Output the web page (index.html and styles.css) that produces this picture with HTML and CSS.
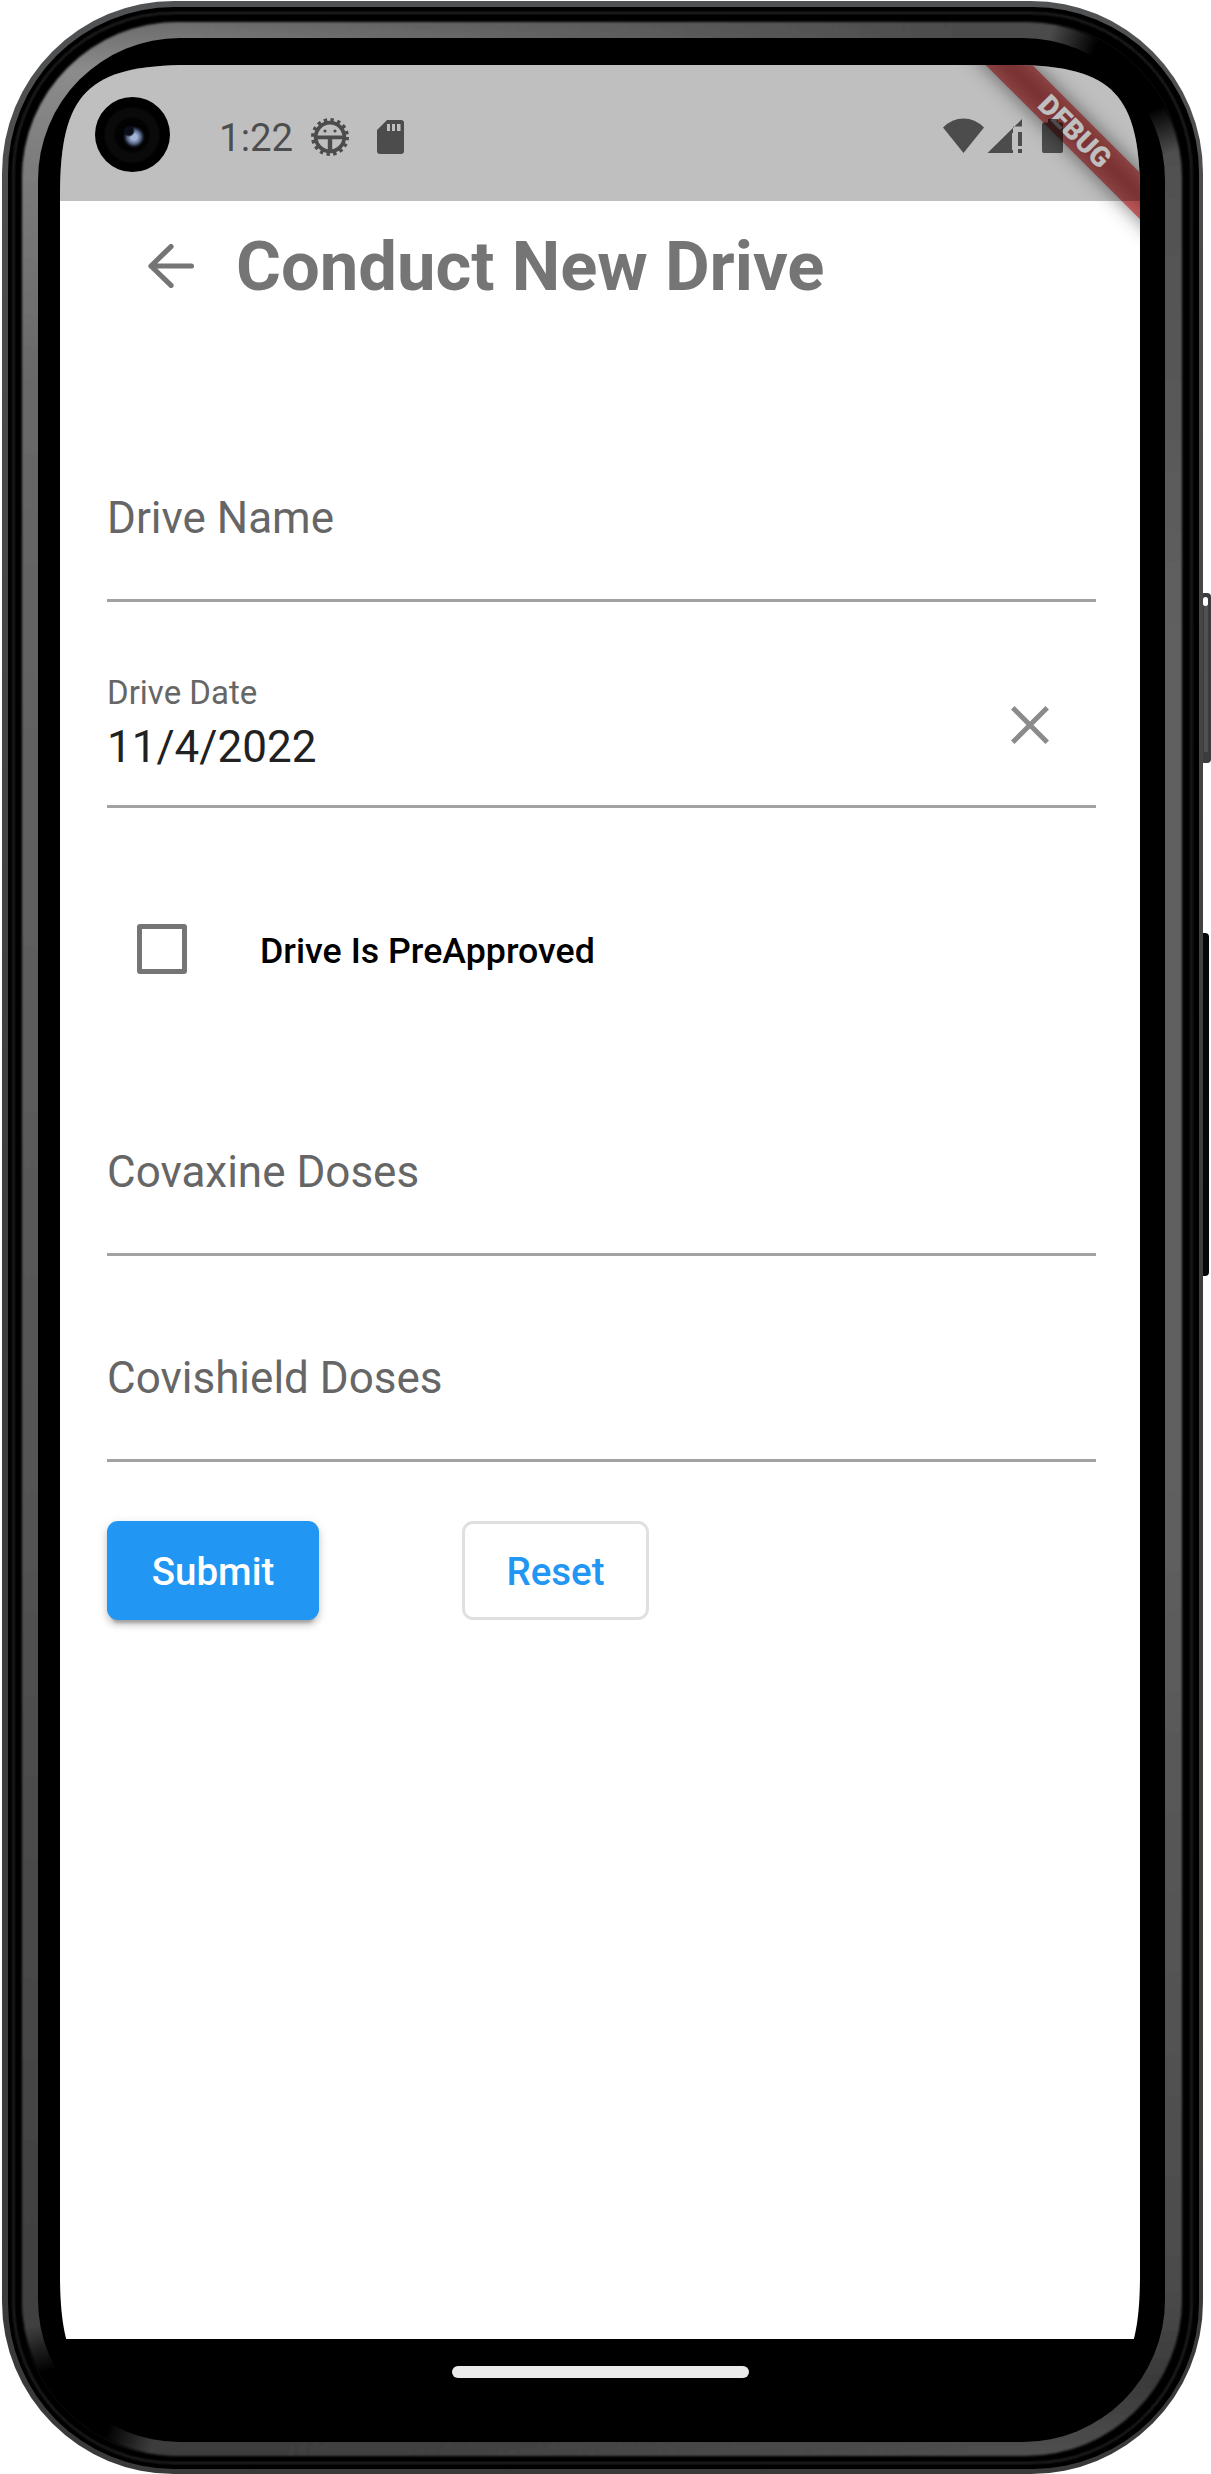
FILE: index.html
```html
<!DOCTYPE html>
<html lang="en">
<head>
<meta charset="utf-8">
<title>Conduct New Drive</title>
<link rel="stylesheet" href="styles.css">
</head>
<body>
<div class="device">
  <svg class="frame" width="1211" height="2474" viewBox="0 0 1211 2474" aria-hidden="true">
    <defs>
      <linearGradient id="rim" x1="0" y1="0" x2="0" y2="1">
        <stop offset="0" stop-color="#505254"/>
        <stop offset=".1" stop-color="#4a4c4c"/>
        <stop offset=".5" stop-color="#3c3e3e"/>
        <stop offset="1" stop-color="#3a3a3a"/>
      </linearGradient>
      <linearGradient id="shineLeft" x1="0" y1="0" x2="0" y2="1">
        <stop offset="0" stop-color="#6c6c6c"/>
        <stop offset=".02" stop-color="#8c8c8c"/>
        <stop offset=".06" stop-color="#7c7c7c"/>
        <stop offset=".15" stop-color="#686868"/>
        <stop offset=".6" stop-color="#545454"/>
        <stop offset="1" stop-color="#3c3c3c"/>
      </linearGradient>
      <linearGradient id="shineRight" x1="0" y1="0" x2="0" y2="1">
        <stop offset="0" stop-color="#4c4c4c"/>
        <stop offset=".25" stop-color="#606060"/>
        <stop offset=".6" stop-color="#606060"/>
        <stop offset=".93" stop-color="#4c4c4c"/>
        <stop offset=".97" stop-color="#3a3a3a"/>
        <stop offset="1" stop-color="#505050"/>
      </linearGradient>
      <linearGradient id="leftToRight">
        <stop offset=".15" stop-color="#fff"/>
        <stop offset=".8" stop-color="#000"/>
      </linearGradient>
      <radialGradient id="fade">
        <stop offset="0" stop-color="#000"/>
        <stop offset=".5" stop-color="#000"/>
        <stop offset="1" stop-color="#000" stop-opacity="0"/>
      </radialGradient>
      <mask id="leftMask"><rect width="1211" height="2474" fill="url(#leftToRight)"/></mask>
      <clipPath id="ring"><rect x="21" y="21" width="1162" height="2436" rx="157"/></clipPath>
      <filter id="soft" x="-5%" y="-5%" width="110%" height="110%"><feGaussianBlur stdDeviation="1"/></filter>
    </defs>
    <rect x="1200" y="593" width="11" height="170" rx="4" fill="#3c3c3c"/>
    <rect x="1204" y="604" width="4" height="148" fill="#505050"/>
    <rect x="1203" y="597" width="5" height="9" rx="2.5" fill="#fff"/>
    <rect x="1196" y="933" width="13" height="343" rx="4" fill="#060808"/>
    <rect x="2" y="1" width="1201" height="2473" rx="172" fill="url(#rim)"/>
    <rect x="8" y="7" width="1191" height="2462" rx="166" fill="#000"/>
    <rect x="13.5" y="13" width="1178" height="2450" rx="160" fill="none" stroke="#262626" stroke-width="2" filter="url(#soft)"/>
    <g filter="url(#soft)">
      <rect x="22" y="22" width="1160" height="2434" rx="156" fill="url(#shineRight)"/>
      <rect x="22" y="22" width="1160" height="2434" rx="156" fill="url(#shineLeft)" mask="url(#leftMask)"/>
    </g>
    <g clip-path="url(#ring)">
      <circle cx="1140" cy="64" r="95" fill="url(#fade)"/>
      <circle cx="62" cy="2416" r="95" fill="url(#fade)"/>
    </g>
    <rect x="38" y="38" width="1127" height="2404" rx="142" fill="#000"/>
  </svg>

  <main class="screen">
    <header class="appbar">
      <svg width="46" height="44" viewBox="0 0 46 44" class="back" aria-label="Back"><path d="M23 2.6 3 22l20 19.4M3 22h40.4"/></svg>
      <h1 class="title">Conduct New Drive</h1>
    </header>

    <form class="form">
      <div class="field"><span class="label">Drive Name</span></div>
      <div class="field dated">
        <div class="stack">
          <span class="small">Drive Date</span>
          <span class="value">11/4/2022</span>
        </div>
        <svg class="clear" width="38" height="38" viewBox="0 0 38 38" aria-label="Clear"><path d="m1.8 1.8 34.4 34.4M36.2 1.8 1.8 36.2"/></svg>
      </div>
      <div class="check">
        <span class="box"></span>
        <span class="check-text">Drive Is PreApproved</span>
      </div>
      <div class="field"><span class="label">Covaxine Doses</span></div>
      <div class="field"><span class="label">Covishield Doses</span></div>
      <div class="actions">
        <button type="button" class="btn submit">Submit</button>
        <button type="button" class="btn reset">Reset</button>
      </div>
    </form>

    <footer class="navbar"><span class="pill"></span></footer>

    <svg class="banner" width="230" height="230" viewBox="850 0 230 230">
      <defs><filter id="shadow" x="-30%" y="-200%" width="160%" height="500%"><feGaussianBlur stdDeviation="10"/></filter></defs>
      <g transform="translate(1014 65) rotate(45)">
        <rect x="-150" y="-16.5" width="300" height="33" fill="#000" fill-opacity=".5" filter="url(#shadow)"/>
        <rect x="-150" y="-16.5" width="300" height="33" fill="#b71c1c" fill-opacity=".627"/>
        <text class="banner-text" x="1.500" y="10" text-anchor="middle">DEBUG</text>
      </g>
    </svg>

    <div class="status">
      <span class="time">1:22</span>
      <svg class="gear" width="40" height="40" viewBox="-20 -20 40 40">
        <circle r="14.3" fill="none" stroke="currentColor" stroke-width="3.8"/>
        <circle r="17" fill="none" stroke="currentColor" stroke-width="4" stroke-dasharray="3.3 3.376"/>
        <path d="M-14-1.400h28v3.600H2.200v12h-4.400v-12H-14z" fill="currentColor"/>
        <circle cx="-5" cy="-6" r="1.600" fill="currentColor"/><circle cx="5" cy="-6" r="1.600" fill="currentColor"/>
      </svg>
      <svg class="sd" width="27" height="34" viewBox="0 0 27 34"><path fill="currentColor" fill-rule="evenodd" d="M10 0h14q3 0 3 3v28q0 3-3 3H3q-3 0-3-3V10zM10 4v7h3V4zm5 0v7h3V4zm5 0v7h3.500V4z"/></svg>
      <svg class="signals" width="120" height="36" viewBox="0 0 120 36">
        <path fill="currentColor" d="M0 9.500Q9 .5 20.500.5T41 9.500L20.500 35z"/>
        <path fill="currentColor" d="M79 1v7.500H70V15h-1v17h1v3H44.500zM75 14h4v14h-4zm0 17h4v4h-4z"/>
        <path fill="currentColor" d="M105 1h10v3.500h3q2 0 2 2V33q0 2-2 2h-17q-2 0-2-2V6.500q0-2 2-2h4z"/>
      </svg>
    </div>
    <span class="camera"></span>
  </main>
</div>
</body>
</html>
```
FILE: styles.css
```css
* { box-sizing: border-box; }

body {
  margin: 0;
  background: #fff;
  font-family: Roboto, "Liberation Sans", sans-serif;
}

.device {
  position: relative;
  width: 1211px;
  height: 2474px;
  padding: 65px 71px 69px 60px;
  overflow: hidden;
}

.frame {
  position: absolute;
  inset: 0;
}

.screen {
  position: relative;
  display: flex;
  flex-direction: column;
  width: 1080px;
  height: 2340px;
  padding-top: 136px;
  background: linear-gradient(#fff 2274px, #000 2274px);
  clip-path: path("M0 130C0 28 28 0 130 0H950C1052 0 1080 28 1080 130V2210C1080 2312 1052 2340 950 2340H130C28 2340 0 2312 0 2210Z");
}

.appbar {
  display: flex;
  align-items: center;
  gap: 42px;
  height: 130px;
  padding-left: 88px;
}

.back, .clear { display: block; fill: none; stroke: #757575; }
.back { stroke-width: 5.2; stroke-linecap: round; stroke-linejoin: round; }

.title {
  margin: 2px 0 0;
  font-size: 68.75px;
  font-weight: 700;
  line-height: 80px;
  color: #757575;
  white-space: nowrap;
}

.form {
  flex: 1;
  padding: 65px 44px 0 47px;
}

.field {
  height: 206px;
  padding-top: 96px;
  border-bottom: 3px solid #a2a2a2;
}

.label, .value, .small { display: block; white-space: nowrap; }

.label, .value {
  font-size: 44px;
  line-height: 52px;
  color: #666;
}

.dated {
  display: flex;
  justify-content: space-between;
  padding: 72px 47px 0 0;
}

.small {
  margin-bottom: 9px;
  font-size: 33px;
  line-height: 38px;
  color: #666;
}

.value { color: #212121; }
.clear { margin-top: 32px; stroke: #8b8b8b; stroke-width: 5; }

.check {
  display: flex;
  align-items: center;
  gap: 73px;
  height: 242px;
  padding: 0 0 0 30px;
}

.box {
  width: 50px;
  height: 50px;
  margin-top: 40px;
  border: 5px solid #757575;
  border-radius: 3px;
}

.check-text {
  margin-top: 43px;
  font-size: 35.75px;
  font-weight: 500;
  line-height: 42px;
  color: #000;
}

.actions {
  display: flex;
  gap: 143px;
  padding-top: 59px;
}

.btn {
  height: 99px;
  padding: 2px 0 0;
  border: 0;
  border-radius: 11px;
  font: 500 38.5px/97px Roboto, "Liberation Sans", sans-serif;
}

.submit {
  width: 212px;
  color: #fff;
  background: #2196f3;
  box-shadow: 0 8px 3px -5px rgba(0, 0, 0, .2), 0 5px 6px rgba(0, 0, 0, .14), 0 3px 12px rgba(0, 0, 0, .12);
}

.reset {
  width: 187px;
  color: #2196f3;
  background: #fff;
  border: 3px solid #e0e0e0;
  line-height: 91px;
}

.navbar {
  display: flex;
  justify-content: center;
  align-items: center;
  height: 66px;
  background: #000;
}

.pill {
  width: 297px;
  height: 12px;
  border-radius: 6px;
  background: #ebebeb;
}

.banner {
  position: absolute;
  top: 0;
  right: 0;
}

.banner-text {
  font-size: 28px;
  font-weight: 900;
  fill: #fff;
}

/* Translucent system bar: tints whatever the app draws beneath it. */
.status {
  position: absolute;
  inset: 0 0 auto;
  display: flex;
  align-items: center;
  height: 136px;
  padding: 7px 0 0 159px;
  background: rgba(0, 0, 0, .25);
  color: rgba(0, 0, 0, .6);
}

.time { width: 91px; padding-top: 2px; font-size: 38.5px; line-height: 46px; }
.gear { color: #4c4c4c; }
.sd { margin-left: 27px; }
.signals { position: absolute; top: 53px; left: 883px; }

.camera {
  position: absolute;
  top: 32px;
  left: 35px;
  width: 75px;
  height: 75px;
  border-radius: 50%;
  background:
    radial-gradient(circle at 34px 34px, #0b0d18 0 4px, transparent 6px),
    radial-gradient(circle at 39px 40px, #a3b5d6 0 3px, #53627f 7px, #1c2230 9px, transparent 11px),
    radial-gradient(circle at 37px 38px, #020203 0 16px, #0a0a0a 19px 26px, #000 29px);
}
```
